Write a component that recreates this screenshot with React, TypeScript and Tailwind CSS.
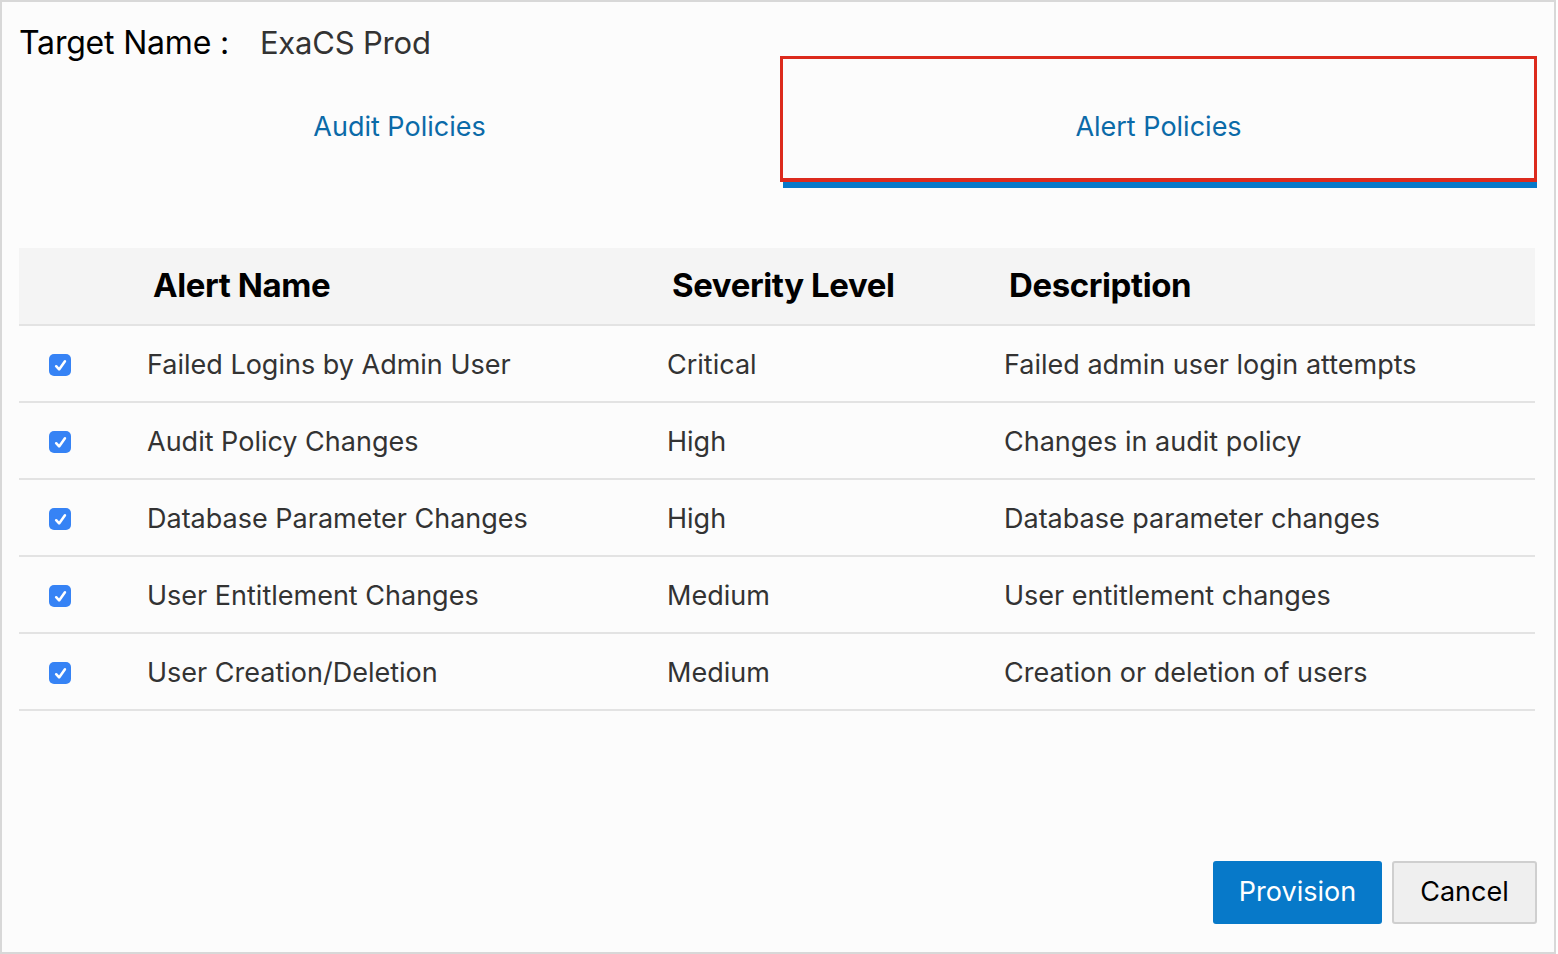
import React from 'react';

const rows = [
  { name: 'Failed Logins by Admin User', severity: 'Critical', description: 'Failed admin user login attempts' },
  { name: 'Audit Policy Changes', severity: 'High', description: 'Changes in audit policy' },
  { name: 'Database Parameter Changes', severity: 'High', description: 'Database parameter changes' },
  { name: 'User Entitlement Changes', severity: 'Medium', description: 'User entitlement changes' },
  { name: 'User Creation/Deletion', severity: 'Medium', description: 'Creation or deletion of users' },
];

const CheckBox = () => (
  <span className="flex h-[22px] w-[22px] items-center justify-center rounded-[5px] bg-[#3683f5]">
    <svg viewBox="0 0 16 16" className="h-[17px] w-[17px]" fill="none">
      <path d="M3.9 8.7l2.8 3L12.2 4" stroke="white" strokeWidth="2.4" strokeLinecap="round" strokeLinejoin="round" />
    </svg>
  </span>
);

const App = () => {
  return (
    <div className="h-[954px] w-[1558px] bg-white font-['Inter','Liberation_Sans',sans-serif]">
      <div className="flex h-[954px] w-[1556px] flex-col border-2 border-[#d8d8d8] bg-[#fcfcfc] px-[17px]">
        <div className="flex h-[54px] items-baseline pt-[25px] leading-none tracking-[-0.2px]">
          <span className="text-[32px] text-black">Target Name :</span>
          <span className="ml-[31px] text-[31px] text-[#333]">ExaCS Prod</span>
        </div>

        <div className="flex h-[132px]">
          <div className="flex w-[761px] items-center justify-center pt-[10px] text-[27px] text-[#0b6aa8]">
            Audit Policies
          </div>
          <div className="flex flex-1 flex-col">
            <div className="flex flex-1 items-center justify-center border-[3px] border-b-4 border-[#dc2a1d] pt-[17px] text-[27px] text-[#0b6aa8]">
              Alert Policies
            </div>
            <div className="ml-[3px] h-[6px] bg-[#0779c9]" />
          </div>
        </div>

        <div className="mt-[60px] flex flex-col pr-[2px]">
          <div className="grid h-[78px] grid-cols-[128px_520px_337px_1fr] items-center border-b-2 border-[#e3e3e3] bg-[#f4f4f4] text-[33px] font-bold text-black tracking-[-0.4px]">
            <span />
            <span className="pl-[6px]">Alert Name</span>
            <span className="pl-[5px]">Severity Level</span>
            <span className="pl-[5px]">Description</span>
          </div>
          {rows.map((r) => (
            <div
              key={r.name}
              className="grid h-[77px] grid-cols-[128px_520px_337px_1fr] items-center border-b-2 border-[#e3e3e3] pt-[3px] text-[27px] text-[#333]"
            >
              <span className="pl-[30px]">
                <CheckBox />
              </span>
              <span>{r.name}</span>
              <span>{r.severity}</span>
              <span>{r.description}</span>
            </div>
          ))}
        </div>

        <div className="mt-auto mb-[28px] flex justify-end gap-[10px]">
          <button className="h-[63px] w-[169px] rounded-[3px] bg-[#0779c9] text-[27px] text-white">Provision</button>
          <button className="h-[63px] w-[145px] rounded-[3px] border-2 border-[#cfcfcf] bg-[#efefef] text-[27px] text-black">
            Cancel
          </button>
        </div>
      </div>
    </div>
  );
};

export default App;
